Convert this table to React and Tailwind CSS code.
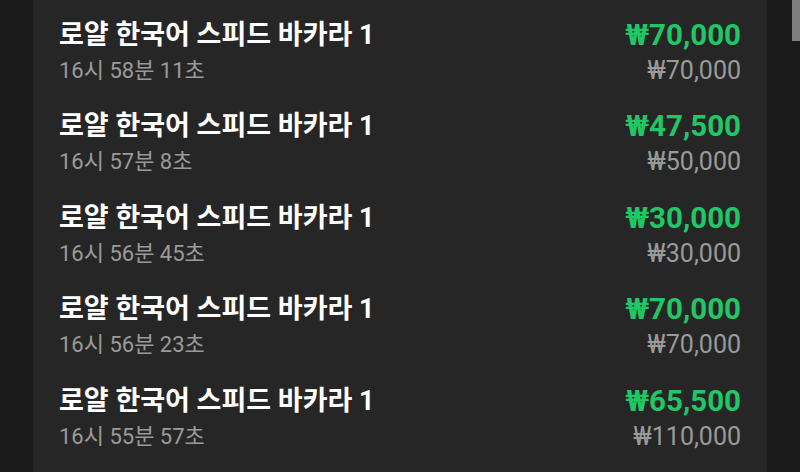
import React from "react";

const bets = [
  { time: "16시 58분 11초", win: "₩70,000", stake: "₩70,000" },
  { time: "16시 57분 8초", win: "₩47,500", stake: "₩50,000" },
  { time: "16시 56분 45초", win: "₩30,000", stake: "₩30,000" },
  { time: "16시 56분 23초", win: "₩70,000", stake: "₩70,000" },
  { time: "16시 55분 57초", win: "₩65,500", stake: "₩110,000" },
];

const BetRow = ({ time, win, stake }) => {
  return (
    <div className="flex h-[91.5px] items-center justify-between">
      <div className="flex flex-col">
        <h4 className="text-[27px] font-bold leading-[35px] text-white">
          로얄 한국어 스피드 바카라 1
        </h4>
        <p className="text-[22px] leading-[35px] text-[#9a9a9a]">{time}</p>
      </div>

      <div className="flex flex-col items-end">
        <p className="text-[29.5px] font-bold leading-[35px] text-[#1fc766]">
          {win}
        </p>
        <p className="text-[25px] leading-[35px] text-[#9a9a9a]">{stake}</p>
      </div>
    </div>
  );
};

export default function App() {
  return (
    <div
      className="flex h-[472px] w-[800px] overflow-hidden bg-[#1b1b1b]"
      style={{ fontFamily: 'Roboto, "Noto Sans CJK KR", sans-serif' }}
    >
      <div className="w-[33px] shrink-0" />

      <section className="w-[734px] shrink-0 bg-[#262626] px-[26px] pt-[7px]">
        {bets.map((bet, i) => (
          <BetRow key={i} {...bet} />
        ))}
      </section>

      <div className="flex flex-1 justify-end">
        <div className="h-[41px] w-[8px] bg-[#7f7f7f]" />
      </div>
    </div>
  );
}
